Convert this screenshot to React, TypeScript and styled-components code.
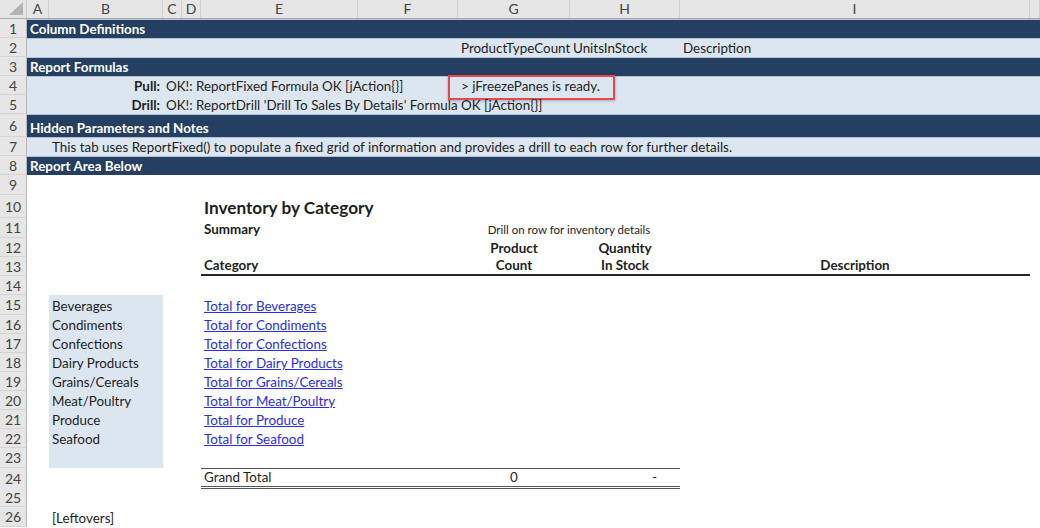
import styled, { createGlobalStyle } from "styled-components";

const COLS = "22px 114px 19px 19px 157px 100px 112px 110px 350px 1fr";
const LETTERS = ["A", "B", "C", "D", "E", "F", "G", "H", "I", ""];

const GlobalStyle = createGlobalStyle`
  body {
    margin: 0;
    background: #ffffff;
    font-family: Lato, "Liberation Sans", sans-serif;
    font-size: 13.4px;
    color: #1e1e1e;
    overflow: hidden;
  }
`;

type Band = "dark" | "light" | "none";
type Rule = "thick" | "total" | "none";

const categories = [
  "Beverages",
  "Condiments",
  "Confections",
  "Dairy Products",
  "Grains/Cereals",
  "Meat/Poultry",
  "Produce",
  "Seafood",
];

const App = () => {
  return (
    <>
      <GlobalStyle />
      <Sheet>
        <HeaderRow>
          <Corner>
            <svg width="14" height="13" viewBox="0 0 14 13">
              <path d="M14 0 L14 13 L0 13 Z" fill="#b4b4b4" />
            </svg>
          </Corner>
          <ColHeads>
            {LETTERS.map((l, i) => (
              <ColHead key={i}>{l}</ColHead>
            ))}
          </ColHeads>
        </HeaderRow>

        <Row $h={19}>
          <RowNum>1</RowNum>
          <Body $band="dark">
            <Cell $col="1" $title>Column Definitions</Cell>
          </Body>
        </Row>
        <Row $h={19}>
          <RowNum>2</RowNum>
          <Body $band="light">
            <Cell $col="7">ProductTypeCount</Cell>
            <Cell $col="8">UnitsInStock</Cell>
            <Cell $col="9">Description</Cell>
          </Body>
        </Row>
        <Row $h={19}>
          <RowNum>3</RowNum>
          <Body $band="dark">
            <Cell $col="1" $title>Report Formulas</Cell>
          </Body>
        </Row>
        <Row $h={19}>
          <RowNum>4</RowNum>
          <Body $band="light" $flat="bottom">
            <Cell $col="2" $align="right" $bold>Pull:</Cell>
            <Cell $col="3">OK!: ReportFixed Formula OK [jAction{"{}"}]</Cell>
            <Cell $col="7">
              <Callout />
              &gt; jFreezePanes is ready.
            </Cell>
          </Body>
        </Row>
        <Row $h={19}>
          <RowNum>5</RowNum>
          <Body $band="light" $flat="top">
            <Cell $col="2" $align="right" $bold>Drill:</Cell>
            <Cell $col="3">
              OK!: ReportDrill 'Drill To Sales By Details' Formula OK [jAction{"{}"}]
            </Cell>
          </Body>
        </Row>
        <Row $h={23}>
          <RowNum>6</RowNum>
          <Body $band="dark">
            <Cell $col="1" $title>Hidden Parameters and Notes</Cell>
          </Body>
        </Row>
        <Row $h={19}>
          <RowNum>7</RowNum>
          <Body $band="light">
            <Cell $col="2">
              This tab uses ReportFixed() to populate a fixed grid of information and provides a
              drill to each row for further details.
            </Cell>
          </Body>
        </Row>
        <Row $h={19}>
          <RowNum>8</RowNum>
          <Body $band="dark">
            <Cell $col="1" $title>Report Area Below</Cell>
          </Body>
        </Row>
        <Row $h={20}>
          <RowNum>9</RowNum>
          <Body />
        </Row>
        <Row $h={23}>
          <RowNum>10</RowNum>
          <Body>
            <Cell $col="5">
              <Heading>Inventory by Category</Heading>
            </Cell>
          </Body>
        </Row>
        <Row $h={20}>
          <RowNum>11</RowNum>
          <Body>
            <Cell $col="5" $bold>Summary</Cell>
            <Cell $col="7 / 9" $align="center" $small>
              Drill on row for inventory details
            </Cell>
          </Body>
        </Row>
        <Row $h={19}>
          <RowNum>12</RowNum>
          <Body>
            <Cell $col="7" $align="center" $bold>Product</Cell>
            <Cell $col="8" $align="center" $bold>Quantity</Cell>
          </Body>
        </Row>
        <Row $h={19}>
          <RowNum>13</RowNum>
          <Body>
            <Cell $col="5 / 7" $bold $rule="thick">Category</Cell>
            <Cell $col="7" $align="center" $bold $rule="thick">Count</Cell>
            <Cell $col="8" $align="center" $bold $rule="thick">In Stock</Cell>
            <Cell $col="9" $align="center" $bold $rule="thick">Description</Cell>
          </Body>
        </Row>
        <Row $h={19}>
          <RowNum>14</RowNum>
          <Body />
        </Row>
        {categories.map((c, i) => (
          <Row key={c} $h={i === 0 ? 20 : 19}>
            <RowNum>{15 + i}</RowNum>
            <Body>
              <Cell $col="2" $fill>{c}</Cell>
              <Cell $col="5">
                <DrillLink href="#">Total for {c}</DrillLink>
              </Cell>
            </Body>
          </Row>
        ))}
        <Row $h={20}>
          <RowNum>23</RowNum>
          <Body>
            <Cell $col="2" $fill />
          </Body>
        </Row>
        <Row $h={20}>
          <RowNum>24</RowNum>
          <Body>
            <Cell $col="5 / 7" $rule="total">Grand Total</Cell>
            <Cell $col="7" $align="center" $rule="total">0</Cell>
            <Cell $col="8" $align="right" $rule="total">
              <Dash>-</Dash>
            </Cell>
          </Body>
        </Row>
        <Row $h={19}>
          <RowNum>25</RowNum>
          <Body />
        </Row>
        <Row $h={20}>
          <RowNum>26</RowNum>
          <Body>
            <Cell $col="2">[Leftovers]</Cell>
          </Body>
        </Row>
      </Sheet>
    </>
  );
};

export default App;

const Sheet = styled.div`
  display: flex;
  flex-direction: column;
  width: 1040px;
  height: 528px;
  overflow: hidden;
`;

const HeaderRow = styled.div`
  display: grid;
  grid-template-columns: 27px 1fr;
  height: 19px;
  flex: none;
  background: #e6e6e6;
  border-bottom: 1px solid #ababab;
  box-sizing: border-box;
`;

const Corner = styled.div`
  display: flex;
  align-items: flex-end;
  justify-content: flex-end;
  padding: 0 3px 3px 0;
  border-right: 1px solid #c8c8c8;
`;

const ColHeads = styled.div`
  display: grid;
  grid-template-columns: ${COLS};
`;

const ColHead = styled.div`
  display: flex;
  align-items: center;
  justify-content: center;
  border-right: 1px solid #d0d0d0;
  color: #444444;
  font-size: 14px;
  line-height: 18px;
`;

const Row = styled.div<{ $h: number }>`
  display: grid;
  grid-template-columns: 27px 1fr;
  height: ${({ $h }) => $h}px;
  flex: none;
`;

const RowNum = styled.div`
  display: flex;
  align-items: center;
  justify-content: center;
  background: #e6e6e6;
  border-right: 1px solid #b8b8b8;
  border-bottom: 1px solid #d4d4d4;
  box-sizing: border-box;
  color: #444444;
  font-size: 14px;
`;

const bandBg = { dark: "#243f62", light: "#dce6f1", none: "transparent" };

const Body = styled.div<{ $band?: Band; $flat?: "top" | "bottom" }>`
  display: grid;
  grid-template-columns: ${COLS};
  grid-template-rows: 100%;
  box-sizing: border-box;
  background: ${({ $band = "none" }) => bandBg[$band]};
  border-top: ${({ $band, $flat }) =>
    $band && $band !== "none" && $flat !== "top" ? "1px solid #b3c2d4" : "none"};
  color: ${({ $band }) => ($band === "dark" ? "#ffffff" : "#1e1e1e")};
`;

const ruleBorders = {
  thick: "border-bottom: 2px solid #262626;",
  total: "border-top: 1px solid #555555; border-bottom: 3px double #555555;",
  none: "",
};

const Cell = styled.div<{
  $col: string;
  $align?: "left" | "center" | "right";
  $bold?: boolean;
  $title?: boolean;
  $small?: boolean;
  $fill?: boolean;
  $rule?: Rule;
}>`
  grid-column: ${({ $col }) => $col};
  grid-row: 1;
  position: relative;
  display: flex;
  align-items: flex-end;
  justify-content: ${({ $align = "left" }) =>
    $align === "center" ? "center" : $align === "right" ? "flex-end" : "flex-start"};
  padding: 0 3px;
  min-width: 0;
  box-sizing: border-box;
  white-space: nowrap;
  line-height: 17px;
  font-size: ${({ $small }) => ($small ? "11.5px" : "13.4px")};
  font-weight: ${({ $bold, $title }) => ($bold || $title ? 700 : 400)};
  background: ${({ $fill }) => ($fill ? "#dce6f1" : "transparent")};
  ${({ $rule = "none" }) => ruleBorders[$rule]}
`;

const Heading = styled.span`
  font-size: 17.2px;
  font-weight: 700;
  line-height: 21px;
`;

const DrillLink = styled.a`
  color: #2b2bf2;
  text-decoration: underline;
`;

const Dash = styled.span`
  padding-right: 20px;
`;

const Callout = styled.div`
  position: absolute;
  left: -10px;
  top: -2px;
  width: 167px;
  height: 25px;
  box-sizing: border-box;
  border: 2px solid #e5484d;
  box-shadow: 0 1px 3px rgba(0, 0, 0, 0.25);
  pointer-events: none;
`;
